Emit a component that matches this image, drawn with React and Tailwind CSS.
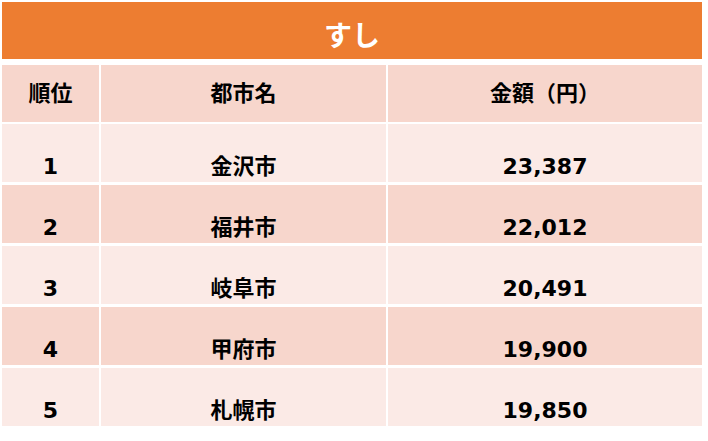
import React from 'react';

const rows = [
  { rank: '1', city: '金沢市', amount: '23,387' },
  { rank: '2', city: '福井市', amount: '22,012' },
  { rank: '3', city: '岐阜市', amount: '20,491' },
  { rank: '4', city: '甲府市', amount: '19,900' },
  { rank: '5', city: '札幌市', amount: '19,850' },
];

const font = { fontFamily: '"DejaVu Sans", "Noto Sans CJK JP", sans-serif' };

export default function App() {
  return (
    <div className="w-[708px] h-[441px] bg-white pt-[2px] pl-[2px]" style={font}>
      <div className="w-[700px]">
        {/* title */}
        <div className="h-[57px] bg-[#ED7D31] flex items-end justify-center pb-[4px]">
          <span className="text-[28px] leading-[36px] font-bold text-white">すし</span>
        </div>

        {/* header */}
        <div className="mt-[6px] grid grid-cols-[97px_285px_314px] gap-x-[2px]">
          {['順位', '都市名', '金額（円）'].map((h) => (
            <div key={h} className="h-[57px] bg-[#F7D6CC] flex items-center justify-center">
              <span className="text-[22px] leading-[28px] font-bold text-black">{h}</span>
            </div>
          ))}
        </div>

        {/* rows */}
        <div className="mt-[2px] flex flex-col gap-y-[3px]">
          {rows.map((r, i) => {
            const bg = i % 2 === 0 ? 'bg-[#FBEAE6]' : 'bg-[#F7D6CC]';
            return (
              <div key={r.rank} className="grid grid-cols-[97px_285px_314px] gap-x-[2px]">
                {[r.rank, r.city, r.amount].map((v, j) => (
                  <div key={j} className={`h-[58px] ${bg} flex items-end justify-center pb-[2px]`}>
                    <span className="text-[22px] leading-[26px] font-bold text-black">{v}</span>
                  </div>
                ))}
              </div>
            );
          })}
        </div>
      </div>
    </div>
  );
}
